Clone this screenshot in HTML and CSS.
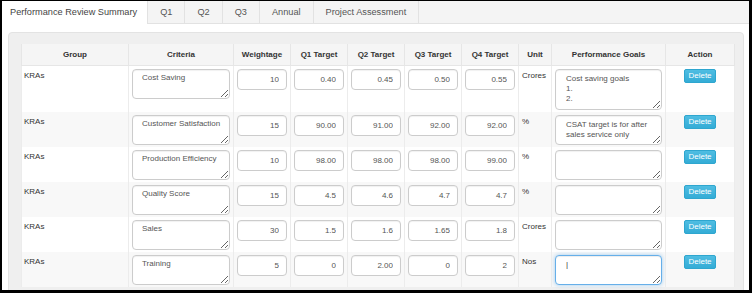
FILE: index.html
```html
<!DOCTYPE html>
<html lang="en">
<head>
  <meta charset="UTF-8" />
  <title>Performance Review Summary</title>
  <link rel="stylesheet" href="styles.css">
</head>
<body>
  <div class="frame">

    <!-- Tabs -->
    <ul class="tabs">
      <li class="active">Performance Review Summary</li>
      <li>Q1</li>
      <li>Q2</li>
      <li>Q3</li>
      <li>Annual</li>
      <li>Project Assessment</li>
    </ul>

    <div class="well">
      <table class="review">
        <colgroup>
          <col class="c-group"><col class="c-crit"><col class="c-num"><col class="c-num"><col class="c-num">
          <col class="c-num"><col class="c-num"><col class="c-unit"><col class="c-goals"><col class="c-action">
        </colgroup>
        <thead>
          <tr>
            <th>Group</th><th>Criteria</th><th>Weightage</th><th>Q1 Target</th><th>Q2 Target</th>
            <th>Q3 Target</th><th>Q4 Target</th><th>Unit</th><th>Performance Goals</th><th>Action</th>
          </tr>
        </thead>
        <tbody>
          <tr class="first">
            <td>KRAs</td>
            <td><textarea class="crit">Cost Saving</textarea></td>
            <td><input value="10"></td>
            <td><input value="0.40"></td>
            <td><input value="0.45"></td>
            <td><input value="0.50"></td>
            <td><input value="0.55"></td>
            <td>Crores</td>
            <td><textarea class="goals tall">Cost saving goals
1.
2.</textarea></td>
            <td class="act"><button>Delete</button></td>
          </tr>
          <tr>
            <td>KRAs</td>
            <td><textarea class="crit">Customer Satisfaction</textarea></td>
            <td><input value="15"></td>
            <td><input value="90.00"></td>
            <td><input value="91.00"></td>
            <td><input value="92.00"></td>
            <td><input value="92.00"></td>
            <td>%</td>
            <td><textarea class="goals">CSAT target is for after sales service only</textarea></td>
            <td class="act"><button>Delete</button></td>
          </tr>
          <tr>
            <td>KRAs</td>
            <td><textarea class="crit">Production Efficiency</textarea></td>
            <td><input value="10"></td>
            <td><input value="98.00"></td>
            <td><input value="98.00"></td>
            <td><input value="98.00"></td>
            <td><input value="99.00"></td>
            <td>%</td>
            <td><textarea class="goals"></textarea></td>
            <td class="act"><button>Delete</button></td>
          </tr>
          <tr>
            <td>KRAs</td>
            <td><textarea class="crit">Quality Score</textarea></td>
            <td><input value="15"></td>
            <td><input value="4.5"></td>
            <td><input value="4.6"></td>
            <td><input value="4.7"></td>
            <td><input value="4.7"></td>
            <td>%</td>
            <td><textarea class="goals"></textarea></td>
            <td class="act"><button>Delete</button></td>
          </tr>
          <tr>
            <td>KRAs</td>
            <td><textarea class="crit">Sales</textarea></td>
            <td><input value="30"></td>
            <td><input value="1.5"></td>
            <td><input value="1.6"></td>
            <td><input value="1.65"></td>
            <td><input value="1.8"></td>
            <td>Crores</td>
            <td><textarea class="goals"></textarea></td>
            <td class="act"><button>Delete</button></td>
          </tr>
          <tr>
            <td>KRAs</td>
            <td><textarea class="crit">Training</textarea></td>
            <td><input value="5"></td>
            <td><input value="0"></td>
            <td><input value="2.00"></td>
            <td><input value="0"></td>
            <td><input value="2"></td>
            <td>Nos</td>
            <td><textarea class="goals focus">|</textarea></td>
            <td class="act"><button>Delete</button></td>
          </tr>
        </tbody>
      </table>
    </div>

  </div>
</body>
</html>
```

FILE: styles.css
```css
* {
  margin: 0;
  padding: 0;
  box-sizing: border-box;
}

body {
  background: #000;
  font-family: 'Liberation Sans', Arial, sans-serif;
  font-size: 8px;
  color: #333;
  overflow: hidden;
}

.frame {
  margin: 1px 3px 0 2px;
  height: 289px;
  background: #fff;
  overflow: hidden;
}

/* Tabs */
.tabs {
  list-style: none;
  display: flex;
  height: 23px;
  background: #f4f4f4;
  border-bottom: 1px solid #e2e2e2;
}

.tabs li {
  padding: 0 12px;
  line-height: 22px;
  font-size: 9.2px;
  color: #555;
  border-right: 1px solid #e2e2e2;
}

.tabs li.active {
  background: #fff;
  color: #444;
  padding: 0 10px 0 8px;
  height: 23px;
  margin-bottom: -1px;
}

/* Gray panel */
.well {
  margin: 8px 5px 0 6px;
  padding: 11px 9px 0 12px;
  background: #efefef;
  border: 1px solid #e3e3e3;
  border-radius: 4px;
  height: 300px;
}

.review {
  width: 713px;
  table-layout: fixed;
  border-collapse: collapse;
  background: #fff;
}

.c-group { width: 107px; }
.c-crit { width: 105px; }
.c-num { width: 57px; }
.c-unit { width: 33px; }
.c-goals { width: 114px; }
.c-action { width: 69px; }

.review th {
  background: #f5f5f5;
  font-weight: bold;
  font-size: 8px;
  color: #333;
  height: 21px;
  text-align: center;
  border: 1px solid #e6e6e6;
  border-top: none;
}

.review td {
  border-left: 1px solid #ececec;
  border-right: 1px solid #ececec;
  padding: 3px 3px 2px 3px;
  vertical-align: top;
  height: 35px;
}

.review tbody tr:nth-child(even) td {
  background: #f8f8f8;
}

.review tr.first td {
  height: 46px;
}

.review td:first-child {
  padding-left: 2px;
  padding-top: 5px;
}

.review td:nth-child(8) {
  padding-top: 5px;
}

textarea,
input {
  display: block;
  width: 100%;
  font-family: inherit;
  font-size: 8px;
  color: #555;
  background: #fff;
  border: 1px solid #ccc;
  border-radius: 4px;
  box-shadow: inset 0 1px 1px rgba(0, 0, 0, 0.06);
  outline: none;
}

input {
  height: 21px;
  text-align: right;
  padding: 0 7px;
}

textarea {
  resize: vertical;
  height: 30px;
  overflow: hidden;
  line-height: 10px;
  padding: 3px 3px 3px 9px;
}

textarea.goals {
  padding: 4px 6px 4px 10px;
}

textarea.tall {
  height: 41px;
}

textarea.focus {
  border-color: #66afe9;
  box-shadow: inset 0 1px 1px rgba(0, 0, 0, 0.075), 0 0 4px rgba(102, 175, 233, 0.6);
  color: #333;
}

.act {
  text-align: center;
}

.act button {
  margin-top: 0;
  font-family: inherit;
  font-size: 8px;
  color: #fff;
  background: linear-gradient(#4fbde2, #34acd6);
  border: 1px solid #2ea6cf;
  border-radius: 2px;
  width: 32px;
  height: 14px;
  line-height: 12px;
}
```
